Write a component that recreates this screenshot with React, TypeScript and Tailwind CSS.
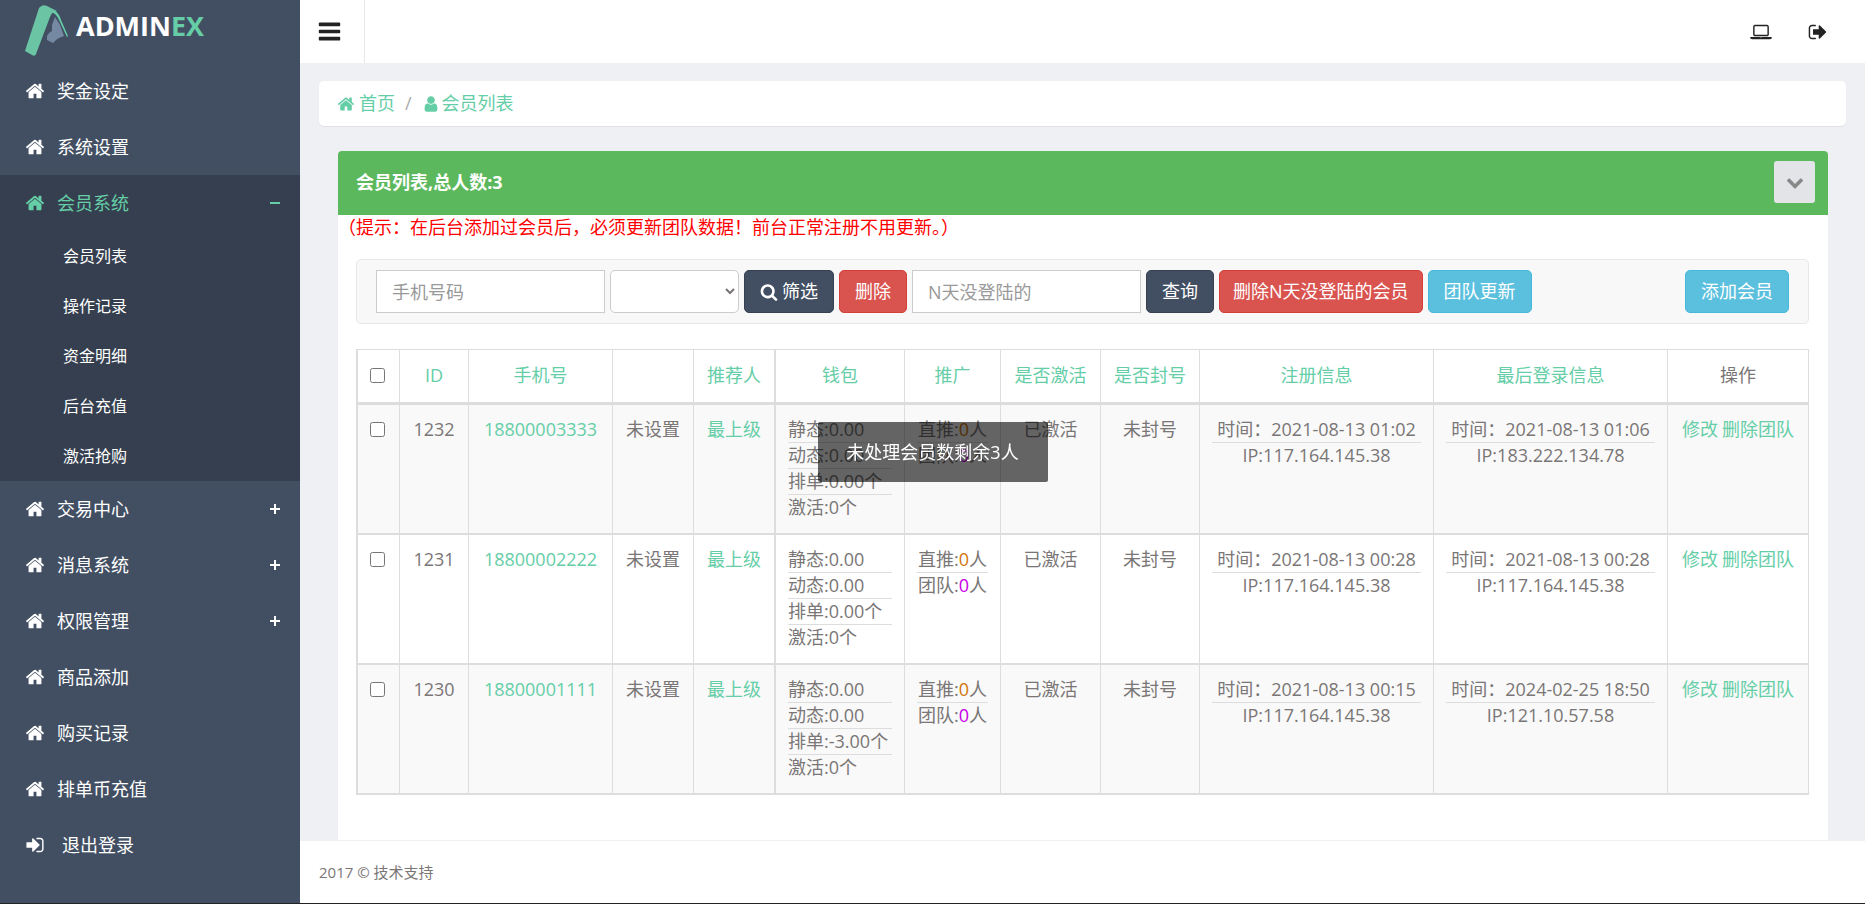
import React from 'react';

const ICONS = {
  home: 'M1472 992v480q0 26-19 45t-45 19h-384v-384h-256v384h-384q-26 0-45-19t-19-45v-480q0-1 .5-3t.5-3l575-474 575 474q1 2 1 6zm223-69l-62 74q-8 9-21 11h-3q-13 0-21-7l-692-577-692 577q-12 8-24 7-13-2-21-11l-62-74q-8-10-7-23.5t11-21.5l719-599q32-26 76-26t76 26l244 204v-195q0-14 9-23t23-9h192q14 0 23 9t9 23v408l219 182q10 8 11 21.5t-7 23.5z',
  user: 'M1536 1399q0 109-62.5 187t-150.5 78h-854q-88 0-150.5-78t-62.5-187q0-85 8.5-160.5t31.5-152 58.5-131 94-89 134.5-34.5q131 128 313 128t313-128q76 0 134.5 34.5t94 89 58.5 131 31.5 152 8.5 160.5zm-256-887q0 159-112.5 271.5t-271.5 112.5-271.5-112.5-112.5-271.5 112.5-271.5 271.5-112.5 271.5 112.5 112.5 271.5z',
  bars: 'M1664 1344v128q0 26-19 45t-45 19h-1408q-26 0-45-19t-19-45v-128q0-26 19-45t45-19h1408q26 0 45 19t19 45zm0-512v128q0 26-19 45t-45 19h-1408q-26 0-45-19t-19-45v-128q0-26 19-45t45-19h1408q26 0 45 19t19 45zm0-512v128q0 26-19 45t-45 19h-1408q-26 0-45-19t-19-45v-128q0-26 19-45t45-19h1408q26 0 45 19t19 45z',
  search: 'M1216 832q0-185-131.5-316.5t-316.5-131.5-316.5 131.5-131.5 316.5 131.5 316.5 316.5 131.5 316.5-131.5 131.5-316.5zm512 832q0 52-38 90t-90 38q-54 0-90-38l-343-342q-179 124-399 124-143 0-273.5-55.5t-225-150-150-225-55.5-273.5 55.5-273.5 150-225 225-150 273.5-55.5 273.5 55.5 225 150 150 225 55.5 273.5q0 220-124 399l343 343q37 37 37 90z',
  signIn: 'M1312 896q0 26-19 45l-544 544q-19 19-45 19t-45-19-19-45v-288h-448q-26 0-45-19t-19-45v-384q0-26 19-45t45-19h448v-288q0-26 19-45t45-19 45 19l544 544q19 19 19 45zm352-352v704q0 119-84.5 203.5t-203.5 84.5h-320q-13 0-22.5-9.5t-9.5-22.5q0-4-1-20t-.5-26.5 3-23.5 10-19.5 20.5-6.5h320q66 0 113-47t47-113v-704q0-66-47-113t-113-47h-312l-11.5-1-11.5-3-8-5.5-7-9-2-13.5q0-4-1-20t-.5-26.5 3-23.5 10-19.5 20.5-6.5h320q119 0 203.5 84.5t84.5 203.5z',
  signOut: 'M704 1440q0 4 1 20t.5 26.5-3 23.5-10 19.5-20.5 6.5h-320q-119 0-203.5-84.5t-84.5-203.5v-704q0-119 84.5-203.5t203.5-84.5h320q13 0 22.5 9.5t9.5 22.5q0 4 1 20t.5 26.5-3 23.5-10 19.5-20.5 6.5h-320q-66 0-113 47t-47 113v704q0 66 47 113t113 47h312l11.5 1 11.5 3 8 5.5 7 9 2 13.5zm928-544q0 26-19 45l-544 544q-19 19-45 19t-45-19-19-45v-288h-448q-26 0-45-19t-19-45v-384q0-26 19-45t45-19h448v-288q0-26 19-45t45-19 45 19l544 544q19 19 19 45z',
  laptop: 'M416 1280q-66 0-113-47t-47-113v-704q0-66 47-113t113-47h1088q66 0 113 47t47 113v704q0 66-47 113t-113 47h-1088zm-32-864v704q0 13 9.5 22.5t22.5 9.5h1088q13 0 22.5-9.5t9.5-22.5v-704q0-13-9.5-22.5t-22.5-9.5h-1088q-13 0-22.5 9.5t-9.5 22.5zm1376 928h160v96q0 40-47 68t-113 28h-1600q-66 0-113-28t-47-68v-96h1760zm-720 96q16 0 16-16t-16-16h-160q-16 0-16 16t16 16h160z',
  chevron: 'M1683 808l-742 741q-19 19-45 19t-45-19l-742-741q-19-19-19-45.5t19-45.5l166-165q19-19 45-19t45 19l531 531 531-531q19-19 45-19t45 19l166 165q19 19 19 45.5t-19 45.5z',
};

interface IconProps {
  name: keyof typeof ICONS;
  className?: string;
}

const Icon: React.FC<IconProps> = ({ name, className }) => (
  <svg viewBox={name === 'laptop' ? '0 0 1920 1792' : '0 0 1792 1792'} className={className} fill="currentColor" aria-hidden="true">
    <path d={ICONS[name]} />
  </svg>
);

const Logo: React.FC = () => (
  <a href="#" className="flex h-[63px] items-start pl-[25px] pt-[5px]">
    <svg viewBox="0 0 44 52" className="h-[52px] w-[44px] shrink-0" aria-hidden="true">
      <path d="M30 12 L35 20 L39 31 L34 33 L31 35 L28 38 L22 35 L22 31 L24 28 L27 26 L27 20 Z" fill="#7589a3" />
      <path d="M29 5 Q34 8 36 15 L43 31 L42 32 L34 15 Q31 8 26 7 Z" fill="#65cea7" />
      <path d="M14 3 Q17 -1 22 1 L32 6 Q27 6 25 12 L11 49 Q10 52 7 50 L0 46 Z" fill="#6bc5a4" />
    </svg>
    <span className="ml-[7px] text-[27px] leading-[42px] font-bold text-white">
      ADMIN<span className="text-[#65cea7]">EX</span>
    </span>
  </a>
);

interface NavItem {
  label: string;
  icon?: keyof typeof ICONS;
  children?: string[];
  open?: boolean;
}

const NAV: NavItem[] = [
  { label: '奖金设定' },
  { label: '系统设置' },
  { label: '会员系统', open: true, children: ['会员列表', '操作记录', '资金明细', '后台充值', '激活抢购'] },
  { label: '交易中心', children: [] },
  { label: '消息系统', children: [] },
  { label: '权限管理', children: [] },
  { label: '商品添加' },
  { label: '购买记录' },
  { label: '排单币充值' },
  { label: '退出登录', icon: 'signIn' },
];

const Sidebar: React.FC = () => (
  <aside className="w-[300px] shrink-0 bg-[#424f63] text-white">
    <Logo />
    <ul>
      {NAV.map((item) => (
        <li key={item.label} className={item.open ? 'bg-[#353f4f]' : ''}>
          <a href="#" className={`flex h-14 items-center pr-5 pl-[25px] ${item.open ? 'text-[#65cea7]' : ''}`}>
            <Icon name={item.icon ?? 'home'} className="h-5 w-5" />
            <span className={item.icon ? 'ml-[17px]' : 'ml-3'}>{item.label}</span>
            {item.children && (
              <svg viewBox="0 0 10 10" className="ml-auto h-[10px] w-[10px]" fill="currentColor" aria-hidden="true">
                <path d={item.open ? 'M0 4h10v2H0z' : 'M0 4h4V0h2v4h4v2H6v4H4V6H0z'} />
              </svg>
            )}
          </a>
          {item.open && (
            <ul>
              {item.children?.map((child) => (
                <li key={child}>
                  <a href="#" className="flex h-[50px] items-center pl-[63px] text-[16px]">{child}</a>
                </li>
              ))}
            </ul>
          )}
        </li>
      ))}
    </ul>
  </aside>
);

const BUTTON = 'flex h-[43px] shrink-0 items-center rounded-[5px] border text-white';
const INPUT = 'h-[43px] w-[229px] border border-[#ccc] bg-white px-[15px] placeholder:text-[#999]';

const FilterBar: React.FC = () => (
  <form className="flex h-[65px] items-center gap-[5px] rounded-[5px] border border-[#e7e7e7] bg-[#f8f8f8] px-[19px]">
    <input type="text" aria-label="手机号码" placeholder="手机号码" className={INPUT} />
    <select aria-label="筛选条件" className="h-[43px] w-[129px] rounded-[5px] border border-[#ccc] bg-white">
      <option></option>
    </select>
    <button type="button" className={`${BUTTON} border-[#374152] bg-[#424f63] px-[15px]`}>
      <Icon name="search" className="mr-1 h-[18px] w-[18px]" />筛选
    </button>
    <button type="button" className={`${BUTTON} border-[#d43f3a] bg-[#d9534f] px-[15px]`}>删除</button>
    <input type="text" aria-label="N天没登陆的" placeholder="N天没登陆的" className={INPUT} />
    <button type="button" className={`${BUTTON} border-[#374152] bg-[#424f63] px-[15px]`}>查询</button>
    <button type="button" className={`${BUTTON} border-[#d43f3a] bg-[#d9534f] px-[13px]`}>删除N天没登陆的会员</button>
    <button type="button" className={`${BUTTON} border-[#46b8da] bg-[#5bc0de] px-[15px]`}>团队更新</button>
    <button type="button" className={`${BUTTON} ml-auto border-[#46b8da] bg-[#5bc0de] px-[15px]`}>添加会员</button>
  </form>
);

const HEADERS = ['ID', '手机号', '', '推荐人', '钱包', '推广', '是否激活', '是否封号', '注册信息', '最后登录信息'];

const MEMBERS = [
  { id: 1232, phone: '18800003333', queue: '0.00', reg: ['2021-08-13 01:02', '117.164.145.38'], last: ['2021-08-13 01:06', '183.222.134.78'] },
  { id: 1231, phone: '18800002222', queue: '0.00', reg: ['2021-08-13 00:28', '117.164.145.38'], last: ['2021-08-13 00:28', '117.164.145.38'] },
  { id: 1230, phone: '18800001111', queue: '-3.00', reg: ['2021-08-13 00:15', '117.164.145.38'], last: ['2024-02-25 18:50', '121.10.57.58'] },
];

const CELL = 'border-b-2 border-l border-[#ddd] px-3 pt-3 pb-[13px] align-top';
const LINE = 'border-b border-[#ddd]';

const VisitCell: React.FC<{ info: string[] }> = ({ info }) => (
  <td className={CELL}>
    <div className={LINE}>时间：{info[0]}</div>
    <div>IP:{info[1]}</div>
  </td>
);

const MemberTable: React.FC = () => (
  <table className="w-full table-fixed border-separate border-spacing-0 border-t border-r border-[#ddd] text-center leading-[25px] whitespace-nowrap">
    <colgroup>
      <col className="w-[43px]" />
      <col className="w-[69px]" />
      <col className="w-[144px]" />
      <col className="w-[81px]" />
      <col className="w-[81px]" />
      <col className="w-[130px]" />
      <col className="w-[96px]" />
      <col className="w-[100px]" />
      <col className="w-[99px]" />
      <col className="w-[234px]" />
      <col className="w-[234px]" />
      <col className="w-[141px]" />
    </colgroup>
    <thead>
      <tr className="h-[55px]">
        <th className="border-b-3 border-l-2 border-[#ddd] pr-[2px] pb-[2px] font-normal">
          <input type="checkbox" aria-label="全选" className="mx-auto block h-[15px] w-[15px]" />
        </th>
        {HEADERS.map((header) => (
          <th key={header} className={`border-b-3 border-[#ddd] pb-[2px] font-normal text-[#65cea7] ${header === '钱包' ? 'border-l-2' : 'border-l'}`}>
            {header}
          </th>
        ))}
        <th className="border-b-3 border-l border-[#ddd] pb-[2px] font-normal">操作</th>
      </tr>
    </thead>
    <tbody>
      {MEMBERS.map((m) => (
        <tr key={m.id} className="odd:bg-[#f9f9f9]">
          <td className="border-b-2 border-l-2 border-[#ddd] pt-[17px] pr-[2px] align-top">
            <input type="checkbox" aria-label={`选择 ${m.id}`} className="mx-auto block h-[15px] w-[15px]" />
          </td>
          <td className={CELL}>{m.id}</td>
          <td className={CELL}><a href="#" className="text-[#65cea7]">{m.phone}</a></td>
          <td className={CELL}>未设置</td>
          <td className={CELL}><a href="#" className="text-[#65cea7]">最上级</a></td>
          <td className="border-b-2 border-l-2 border-[#ddd] px-3 pt-3 pb-[13px] text-left align-top">
            <div className={LINE}>静态:0.00</div>
            <div className={LINE}>动态:0.00</div>
            <div className={LINE}>排单:{m.queue}个</div>
            <div>激活:0个</div>
          </td>
          <td className={CELL}>
            <div className={LINE}>直推:<span className="text-[#d2760a]">0</span>人</div>
            <div>团队:<span className="text-[#c800e6]">0</span>人</div>
          </td>
          <td className={CELL}>已激活</td>
          <td className={CELL}>未封号</td>
          <VisitCell info={m.reg} />
          <VisitCell info={m.last} />
          <td className={CELL}>
            <span className="flex justify-center gap-1 text-[#65cea7]">
              <a href="#">修改</a>
              <a href="#">删除团队</a>
            </span>
          </td>
        </tr>
      ))}
    </tbody>
  </table>
);

const App: React.FC = () => {
  return (
    <div
      lang="zh-CN"
      className="flex min-h-screen border-b border-[#222] bg-[#eff0f4] font-['Open_Sans','Noto_Sans_CJK_SC',sans-serif] text-[18px] leading-[25px] text-[#7a7676]"
    >
      <Sidebar />
      <div className="flex min-w-0 flex-1 flex-col">
        <header className="flex h-[63px] items-center bg-white text-[#222]">
          <button type="button" aria-label="菜单" className="flex h-full w-[65px] items-center border-r border-[#e7e7e7] pl-[17px]">
            <Icon name="bars" className="h-[25px] w-[25px]" />
          </button>
          <a href="#" aria-label="前台" className="ml-auto">
            <Icon name="laptop" className="h-[20px] w-[22px]" />
          </a>
          <a href="#" aria-label="退出" className="mr-[37px] ml-[36px]">
            <Icon name="signOut" className="h-5 w-5" />
          </a>
        </header>

        <main className="flex flex-1 flex-col px-[19px] pt-[18px]">
          <nav className="flex h-[45px] items-center rounded-[5px] bg-white px-[18px] text-[#65cea7] shadow-[0_1px_1px_rgba(0,0,0,0.06)]">
            <a href="#" className="flex items-center gap-1"><Icon name="home" className="h-[18px] w-[18px]" />首页</a>
            <span className="mx-[10px] text-[#aaa]">/</span>
            <a href="#" className="flex items-center gap-[2px]"><Icon name="user" className="h-[18px] w-[18px]" />会员列表</a>
          </nav>

          <section className="mt-[25px] mr-[18px] ml-[19px] flex-1 rounded-t bg-white">
            <div className="flex h-16 items-center justify-between rounded-t bg-[#5cb85c] pr-[13px] pb-[2px] pl-[18px]">
              <h1 className="font-bold text-white">会员列表,总人数:3</h1>
              <button type="button" aria-label="收起" className="flex h-[42px] w-[41px] items-center justify-center rounded-[3px] bg-[#e3e4e8] text-[#888]">
                <Icon name="chevron" className="h-[18px] w-[18px]" />
              </button>
            </div>
            <p className="text-[#f00]">（提示：在后台添加过会员后，必须更新团队数据！前台正常注册不用更新。）</p>
            <div className="pt-[19px] pr-[19px] pl-[18px]">
              <FilterBar />
              <div className="mt-[25px]">
                <MemberTable />
              </div>
            </div>
          </section>
        </main>

        <footer className="h-[63px] border-t border-[#eff0f4] bg-white px-[19px] text-[15px] leading-[62px]">2017 © 技术支持</footer>
      </div>

      <div role="status" className="fixed top-1/2 left-1/2 flex h-[60px] w-[230px] -translate-x-1/2 -translate-y-1/2 items-center justify-center rounded-[2px] bg-black/60 text-white">
        未处理会员数剩余3人
      </div>
    </div>
  );
};

export default App;
